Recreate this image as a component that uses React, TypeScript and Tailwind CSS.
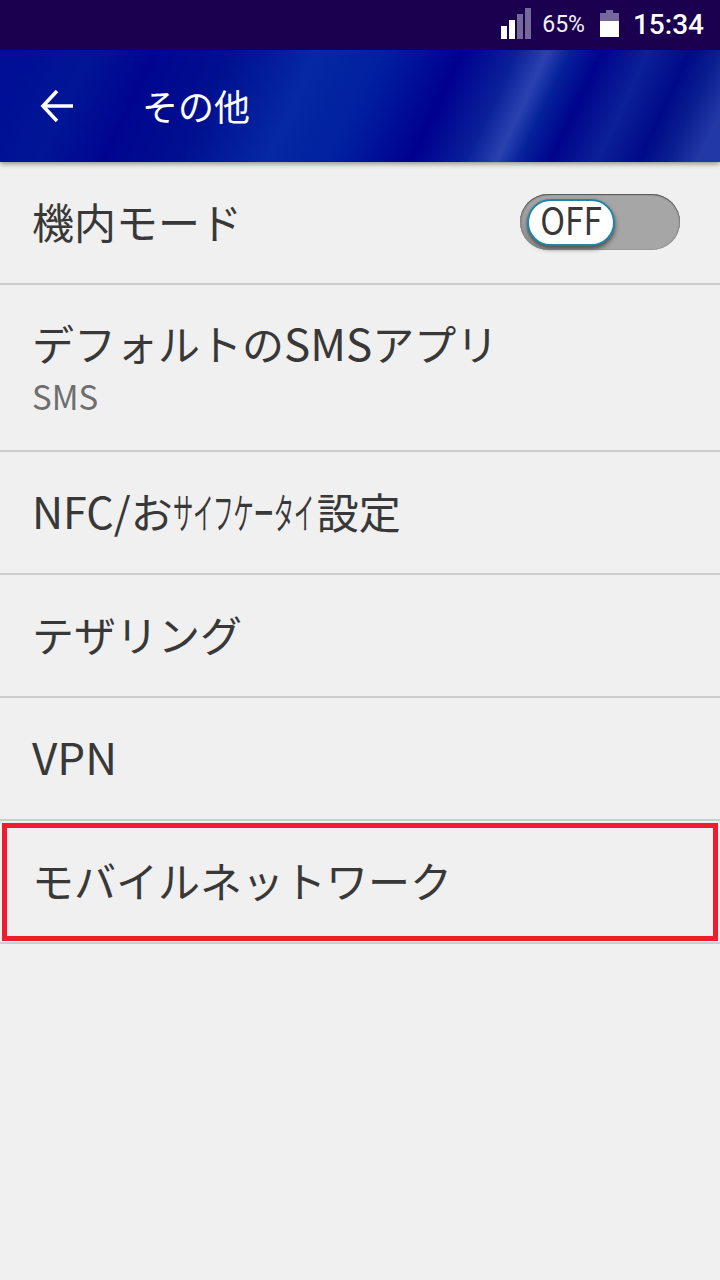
import React from "react";

const font = "font-['Noto_Sans_CJK_JP','Noto_Sans',sans-serif]";

function Row({ h, children }: { h: string; children: React.ReactNode }) {
  return (
    <div className={`${h} relative flex flex-col justify-center border-b-2 border-[#cdcdcd] pl-[32px] pr-[40px] pb-[4px] box-border`}>
      {children}
    </div>
  );
}

const Label = ({ children }: { children: React.ReactNode }) => (
  <div className="h-[56px] text-[42px] leading-[56px] text-[#383838] whitespace-nowrap">{children}</div>
);

const Latin = ({ children }: { children: React.ReactNode }) => (
  <span className="text-[44px] leading-none">{children}</span>
);

export default function App() {
  return (
    <div className={`${font} w-[720px] h-[1280px] overflow-hidden bg-[#f0f0f0]`}>
      <div className="h-[50px] bg-[#1b0050] flex items-center justify-end pr-[16px] text-white font-['Roboto',sans-serif]">
        <svg width="30" height="32" viewBox="0 0 30 32" className="mt-[-2px]">
          <rect x="0" y="18" width="6" height="13" fill="#fff" />
          <rect x="8" y="12" width="6" height="19" fill="#fff" />
          <rect x="16" y="6" width="6" height="25" fill="#75699b" />
          <rect x="24" y="0" width="6" height="31" fill="#75699b" />
        </svg>
        <span className="ml-[11px] text-[23px] text-[#f2f0f6]">65%</span>
        <svg width="20" height="30" viewBox="0 0 20 30" className="ml-[15px] mt-[-2px]">
          <path d="M6 1h7v3h6v8H0V4h6z" fill="#75699b" />
          <rect x="0" y="12" width="19" height="16" fill="#fff" />
        </svg>
        <span className="ml-[13px] text-[28px] font-medium">15:34</span>
      </div>
      <div className="relative z-10 h-[112px] flex items-center text-white shadow-[0_2px_5px_rgba(0,0,0,0.4)] bg-[linear-gradient(115deg,#000f95_0%,#000f95_3%,#011596_12%,#000590_20%,#00108f_30%,#0628a3_41%,#0020a0_50%,#00008f_60%,#0a2099_67%,#2a42b0_71%,#04209a_74%,#00048c_78%,#0c2098_84%,#000a88_89.5%,#0a1d90_93%,#2238a5_97%,#2238a5_100%)]">
        <svg width="34" height="34" viewBox="0 0 34 34" fill="none" stroke="#fff" strokeWidth="3.6" className="ml-[40px]">
          <path d="M33 17H3M17 2L3 17l14 15" />
        </svg>
        <span className="ml-[68px] text-[36px] leading-[48px] mt-[-2px]">その他</span>
      </div>
      <div>
        <Row h="h-[123px]">
          <Label>機内モード</Label>
          <div className="absolute right-[40px] top-[32px] w-[160px] h-[56px] rounded-full bg-[#a6a6a6] shadow-[inset_0_1px_1px_#555,inset_2px_0_2px_#8a8a8a,inset_-1px_0_1px_#8a8a8a] flex items-center pl-[7px]">
            <div className="w-[88px] h-[47px] rounded-full bg-white border-2 border-[#1f86a8] shadow-[0_3px_5px_rgba(0,0,0,0.55)] flex items-center justify-center">
              <span className="inline-block text-[38px] leading-none text-[#383838] scale-x-[0.88] mt-[-6px]">OFF</span>
            </div>
          </div>
        </Row>
        <Row h="h-[167px]">
          <Label>
            デフォルトの<Latin>SMS</Latin>アプリ
          </Label>
          <div className="text-[33px] leading-[44px] text-[#6e6e6e] mt-[2px] origin-left scale-y-105">SMS</div>
        </Row>
        <Row h="h-[123px]">
          <Label>
            <span className="text-[43px] leading-none">NFC/</span>お
            <span className="inline-block w-[141px] mr-[3px] origin-left scale-x-[0.48]">サイフケータイ</span>
            設定
          </Label>
        </Row>
        <Row h="h-[123px]">
          <Label>テザリング</Label>
        </Row>
        <Row h="h-[123px]">
          <Label>
            <Latin>VPN</Latin>
          </Label>
        </Row>
        <Row h="h-[123px]">
          <Label>モバイルネットワーク</Label>
          <div className="absolute left-[2px] right-[2px] top-[2px] bottom-[1px] border-[5px] border-[#ee1c2e]" />
        </Row>
      </div>
    </div>
  );
}
